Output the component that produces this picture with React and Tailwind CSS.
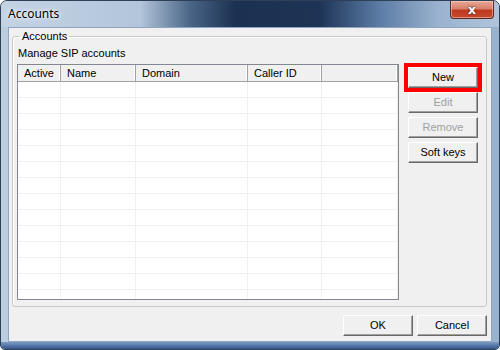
const COLUMNS = [
  { label: 'Active', w: 'w-[43px]' },
  { label: 'Name', w: 'w-[75px]' },
  { label: 'Domain', w: 'w-[112px]' },
  { label: 'Caller ID', w: 'w-[74px]' },
  { label: '', w: 'w-[76px]' },
];

const ROWS = Array.from({ length: 14 });

function Button({ children, disabled, className = '' }) {
  return (
    <div
      className={`relative h-[21px] w-[70px] flex items-center justify-center border border-t-white border-l-white border-r-[#696969] border-b-[#696969] bg-[#f0f0f0] shadow-[inset_-1px_-1px_0_#a0a0a0] text-[11px] ${disabled ? 'text-[#a0a0a0]' : 'text-black'} ${className}`}
    >
      {children}
    </div>
  );
}

export default function App() {
  return (
    <div className="w-[500px] h-[350px] bg-white font-['Liberation_Sans',sans-serif]">
      <div className="w-[500px] h-[350px] flex flex-col rounded-t-[7px] rounded-b-[5px] border border-[#2f3f55] bg-[linear-gradient(to_right,#bccde0,#a9bfd6_60%,#98b1cd)] overflow-hidden">
        {/* Title bar */}
        <div className="h-[26px] flex items-start shrink-0 bg-[linear-gradient(to_right,#c3d3e4_0%,#b2c5da_28%,#4a6587_38%,#1b3151_47%,#1d3456_64%,#5c7ca5_76%,#9bb3cf_88%,#b0c5dc_100%)]">
          <span className="pl-[7px] pt-[5px] text-[12px] leading-[16px] text-black font-['Noto_Sans',sans-serif] [text-shadow:0_0_6px_#fff,0_0_3px_#fff]">
            Accounts
          </span>
          <div className="ml-auto mr-[5px] w-[44px] h-[18px] flex items-center justify-center rounded-b-[4px] border border-t-0 border-[#5a2a24] bg-[linear-gradient(to_bottom,#e8a898_0%,#d8806c_45%,#c0391f_55%,#c44a2e_100%)] shadow-[inset_0_0_0_1px_rgba(255,220,210,0.5)]">
            <span className="text-white font-['DejaVu_Sans',sans-serif] font-bold text-[13px] leading-none [text-shadow:0_0_2px_#4a1a12,0_0_1px_#4a1a12]">
              x
            </span>
          </div>
        </div>

        {/* Client area */}
        <div className="flex-1 min-h-0 mx-[7px] border border-[#8ea4bf] bg-[#f0f0f0] flex flex-col">
          <fieldset className="mt-[2px] ml-[3px] mr-[4px] flex-1 min-h-0 border border-[#c9c9c9] rounded-[3px] shadow-[inset_1px_1px_0_#fff] pl-[4px] flex flex-col">
            <legend className="ml-[3px] px-[2px] text-[11px] leading-[13px] text-black">Accounts</legend>
            <div className="text-[11px] leading-[13px] text-black ml-[1px] mt-[4px]">Manage SIP accounts</div>
            <div className="flex mt-[4px] mb-[6px] flex-1 min-h-0">
              {/* List view */}
              <div className="w-[382px] border border-[#828790] bg-white flex flex-col overflow-hidden">
                <div className="flex h-[17px] shrink-0 border-b border-[#a0a0a0] bg-[#f0f0f0]">
                  {COLUMNS.map((c, i) => (
                    <div
                      key={i}
                      className={`${c.w} h-full shrink-0 flex items-center pl-[6px] text-[11px] text-black border-r border-[#a0a0a0] shadow-[inset_-1px_0_0_#fff]`}
                    >
                      {c.label}
                    </div>
                  ))}
                </div>
                <div className="flex-1 min-h-0 overflow-hidden">
                  {ROWS.map((_, r) => (
                    <div key={r} className="flex h-[16px] border-b border-[#f0f0f0]">
                      {COLUMNS.map((c, i) => (
                        <div key={i} className={`${c.w} h-full shrink-0 border-r border-[#f0f0f0]`} />
                      ))}
                    </div>
                  ))}
                </div>
              </div>

              {/* Side buttons */}
              <div className="ml-[9px] mt-[3px] flex flex-col gap-[4px]">
                <div className="relative">
                  <Button>New</Button>
                  <div className="absolute -inset-[4px] border-4 border-[#ff0000] pointer-events-none" />
                </div>
                <Button disabled>Edit</Button>
                <Button disabled>Remove</Button>
                <Button>Soft keys</Button>
              </div>
            </div>
          </fieldset>

          <div className="flex justify-end gap-[4px] mt-[8px] mb-[5px] mr-[4px] shrink-0">
            <Button>OK</Button>
            <Button>Cancel</Button>
          </div>
        </div>

        {/* Bottom frame */}
        <div className="h-[7px] shrink-0 bg-[linear-gradient(to_bottom,#7e9cc2,#4d72a3_60%,#34568a)]" />
      </div>
    </div>
  );
}
